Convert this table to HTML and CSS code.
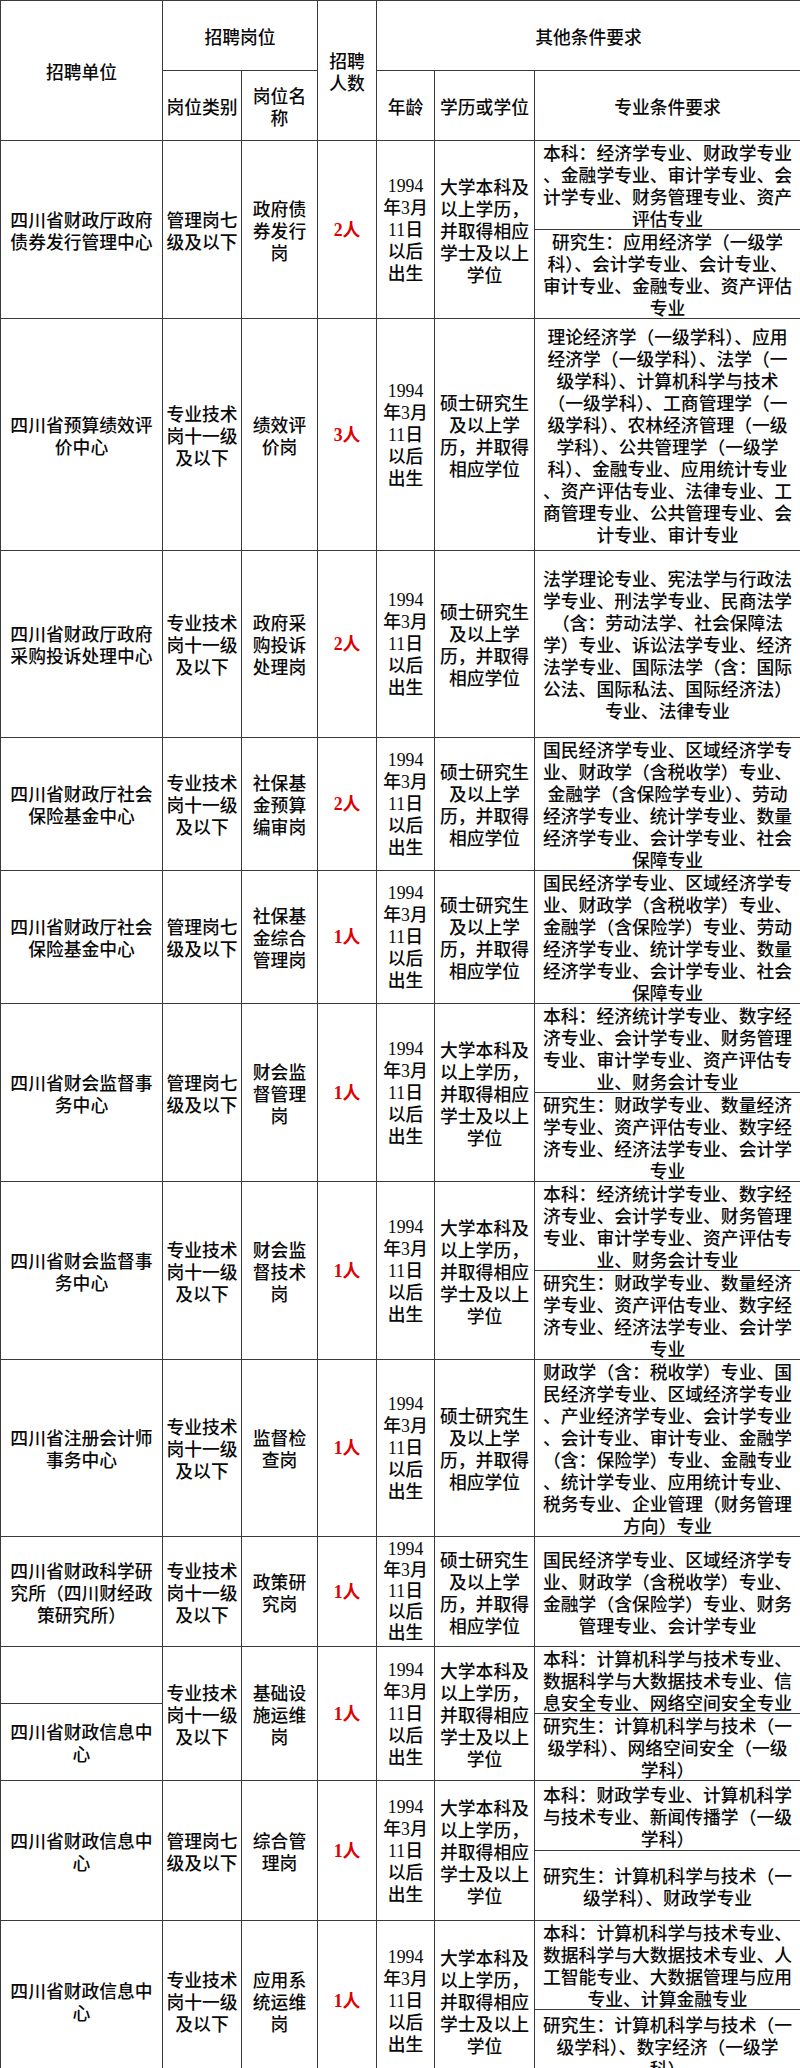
FILE: index.html
```html
<!DOCTYPE html>
<html lang="zh-CN">
<head>
<meta charset="utf-8">
<title>招聘岗位表</title>
<link rel="stylesheet" href="styles.css">
</head>
<body>
<table class="grid">
  <colgroup>
    <col class="c1"><col class="c2"><col class="c3"><col class="c4"><col class="c5"><col class="c6"><col class="c7">
  </colgroup>
  <tr class="h70">
    <td rowspan="2">招聘单位</td>
    <td colspan="2">招聘岗位</td>
    <td rowspan="2">招聘<br>人数</td>
    <td colspan="3">其他条件要求</td>
  </tr>
  <tr class="h70">
    <td>岗位类别</td>
    <td>岗位名<br>称</td>
    <td>年龄</td>
    <td>学历或学位</td>
    <td>专业条件要求</td>
  </tr>

  <!-- row 1 -->
  <tr class="h88">
    <td rowspan="2">四川省财政厅政府<br>债券发行管理中心</td>
    <td rowspan="2">管理岗七<br>级及以下</td>
    <td rowspan="2">政府债<br>券发行<br>岗</td>
    <td rowspan="2" class="count num">2人</td>
    <td rowspan="2" class="num">1994<br>年3月<br>11日<br>以后<br>出生</td>
    <td rowspan="2">大学本科及<br>以上学历，<br>并取得相应<br>学士及以上<br>学位</td>
    <td class="req">本科：经济学专业、财政学专业<br>、金融学专业、审计学专业、会<br>计学专业、财务管理专业、资产<br>评估专业</td>
  </tr>
  <tr class="h88">
    <td class="req">研究生：应用经济学（一级学<br>科）、会计学专业、会计专业、<br>审计专业、金融专业、资产评估<br>专业</td>
  </tr>

  <!-- row 2 -->
  <tr class="h232">
    <td>四川省预算绩效评<br>价中心</td>
    <td>专业技术<br>岗十一级<br>及以下</td>
    <td>绩效评<br>价岗</td>
    <td class="count num">3人</td>
    <td class="num">1994<br>年3月<br>11日<br>以后<br>出生</td>
    <td>硕士研究生<br>及以上学<br>历，并取得<br>相应学位</td>
    <td class="req">理论经济学（一级学科）、应用<br>经济学（一级学科）、法学（一<br>级学科）、计算机科学与技术<br>（一级学科）、工商管理学（一<br>级学科）、农林经济管理（一级<br>学科）、公共管理学（一级学<br>科）、金融专业、应用统计专业<br>、资产评估专业、法律专业、工<br>商管理专业、公共管理专业、会<br>计专业、审计专业</td>
  </tr>

  <!-- row 3 -->
  <tr class="h187">
    <td>四川省财政厅政府<br>采购投诉处理中心</td>
    <td>专业技术<br>岗十一级<br>及以下</td>
    <td>政府采<br>购投诉<br>处理岗</td>
    <td class="count num">2人</td>
    <td class="num">1994<br>年3月<br>11日<br>以后<br>出生</td>
    <td>硕士研究生<br>及以上学<br>历，并取得<br>相应学位</td>
    <td class="req">法学理论专业、宪法学与行政法<br>学专业、刑法学专业、民商法学<br>（含：劳动法学、社会保障法<br>学）专业、诉讼法学专业、经济<br>法学专业、国际法学（含：国际<br>公法、国际私法、国际经济法）<br>专业、法律专业</td>
  </tr>

  <!-- row 4 -->
  <tr class="h133">
    <td>四川省财政厅社会<br>保险基金中心</td>
    <td>专业技术<br>岗十一级<br>及以下</td>
    <td>社保基<br>金预算<br>编审岗</td>
    <td class="count num">2人</td>
    <td class="num">1994<br>年3月<br>11日<br>以后<br>出生</td>
    <td>硕士研究生<br>及以上学<br>历，并取得<br>相应学位</td>
    <td class="req">国民经济学专业、区域经济学专<br>业、财政学（含税收学）专业、<br>金融学（含保险学专业）、劳动<br>经济学专业、统计学专业、数量<br>经济学专业、会计学专业、社会<br>保障专业</td>
  </tr>

  <!-- row 5 -->
  <tr class="h132">
    <td>四川省财政厅社会<br>保险基金中心</td>
    <td>管理岗七<br>级及以下</td>
    <td>社保基<br>金综合<br>管理岗</td>
    <td class="count num">1人</td>
    <td class="num">1994<br>年3月<br>11日<br>以后<br>出生</td>
    <td>硕士研究生<br>及以上学<br>历，并取得<br>相应学位</td>
    <td class="req">国民经济学专业、区域经济学专<br>业、财政学（含税收学）专业、<br>金融学（含保险学）专业、劳动<br>经济学专业、统计学专业、数量<br>经济学专业、会计学专业、社会<br>保障专业</td>
  </tr>

  <!-- row 6 -->
  <tr class="h88">
    <td rowspan="2">四川省财会监督事<br>务中心</td>
    <td rowspan="2">管理岗七<br>级及以下</td>
    <td rowspan="2">财会监<br>督管理<br>岗</td>
    <td rowspan="2" class="count num">1人</td>
    <td rowspan="2" class="num">1994<br>年3月<br>11日<br>以后<br>出生</td>
    <td rowspan="2">大学本科及<br>以上学历，<br>并取得相应<br>学士及以上<br>学位</td>
    <td class="req">本科：经济统计学专业、数字经<br>济专业、会计学专业、财务管理<br>专业、审计学专业、资产评估专<br>业、财务会计专业</td>
  </tr>
  <tr class="h89">
    <td class="req">研究生：财政学专业、数量经济<br>学专业、资产评估专业、数字经<br>济专业、经济法学专业、会计学<br>专业</td>
  </tr>

  <!-- row 7 -->
  <tr class="h88">
    <td rowspan="2">四川省财会监督事<br>务中心</td>
    <td rowspan="2">专业技术<br>岗十一级<br>及以下</td>
    <td rowspan="2">财会监<br>督技术<br>岗</td>
    <td rowspan="2" class="count num">1人</td>
    <td rowspan="2" class="num">1994<br>年3月<br>11日<br>以后<br>出生</td>
    <td rowspan="2">大学本科及<br>以上学历，<br>并取得相应<br>学士及以上<br>学位</td>
    <td class="req">本科：经济统计学专业、数字经<br>济专业、会计学专业、财务管理<br>专业、审计学专业、资产评估专<br>业、财务会计专业</td>
  </tr>
  <tr class="h88">
    <td class="req">研究生：财政学专业、数量经济<br>学专业、资产评估专业、数字经<br>济专业、经济法学专业、会计学<br>专业</td>
  </tr>

  <!-- row 8 -->
  <tr class="h177">
    <td>四川省注册会计师<br>事务中心</td>
    <td>专业技术<br>岗十一级<br>及以下</td>
    <td>监督检<br>查岗</td>
    <td class="count num">1人</td>
    <td class="num">1994<br>年3月<br>11日<br>以后<br>出生</td>
    <td>硕士研究生<br>及以上学<br>历，并取得<br>相应学位</td>
    <td class="req">财政学（含：税收学）专业、国<br>民经济学专业、区域经济学专业<br>、产业经济学专业、会计学专业<br>、会计专业、审计专业、金融学<br>（含：保险学）专业、金融专业<br>、统计学专业、应用统计专业、<br>税务专业、企业管理（财务管理<br>方向）专业</td>
  </tr>

  <!-- row 9 -->
  <tr class="h110">
    <td>四川省财政科学研<br>究所（四川财经政<br>策研究所）</td>
    <td>专业技术<br>岗十一级<br>及以下</td>
    <td>政策研<br>究岗</td>
    <td class="count num">1人</td>
    <td class="num tight">1994<br>年3月<br>11日<br>以后<br>出生</td>
    <td>硕士研究生<br>及以上学<br>历，并取得<br>相应学位</td>
    <td class="req">国民经济学专业、区域经济学专<br>业、财政学（含税收学）专业、<br>金融学（含保险学）专业、财务<br>管理专业、会计学专业</td>
  </tr>

  <!-- row 10 -->
  <tr class="h57">
    <td class="blank"></td>
    <td rowspan="3">专业技术<br>岗十一级<br>及以下</td>
    <td rowspan="3">基础设<br>施运维<br>岗</td>
    <td rowspan="3" class="count num">1人</td>
    <td rowspan="3" class="num">1994<br>年3月<br>11日<br>以后<br>出生</td>
    <td rowspan="3">大学本科及<br>以上学历，<br>并取得相应<br>学士及以上<br>学位</td>
    <td rowspan="2" class="req">本科：计算机科学与技术专业、<br>数据科学与大数据技术专业、信<br>息安全专业、网络空间安全专业</td>
  </tr>
  <tr class="h8">
    <td rowspan="2">四川省财政信息中<br>心</td>
  </tr>
  <tr class="h66">
    <td class="req">研究生：计算机科学与技术（一<br>级学科）、网络空间安全（一级<br>学科）</td>
  </tr>

  <!-- row 11 -->
  <tr class="h70">
    <td rowspan="2">四川省财政信息中<br>心</td>
    <td rowspan="2">管理岗七<br>级及以下</td>
    <td rowspan="2">综合管<br>理岗</td>
    <td rowspan="2" class="count num">1人</td>
    <td rowspan="2" class="num">1994<br>年3月<br>11日<br>以后<br>出生</td>
    <td rowspan="2">大学本科及<br>以上学历，<br>并取得相应<br>学士及以上<br>学位</td>
    <td class="req">本科：财政学专业、计算机科学<br>与技术专业、新闻传播学（一级<br>学科）</td>
  </tr>
  <tr class="h70">
    <td class="req">研究生：计算机科学与技术（一<br>级学科）、财政学专业</td>
  </tr>

  <!-- row 12 -->
  <tr class="h87">
    <td rowspan="2">四川省财政信息中<br>心</td>
    <td rowspan="2">专业技术<br>岗十一级<br>及以下</td>
    <td rowspan="2">应用系<br>统运维<br>岗</td>
    <td rowspan="2" class="count num">1人</td>
    <td rowspan="2" class="num">1994<br>年3月<br>11日<br>以后<br>出生</td>
    <td rowspan="2">大学本科及<br>以上学历，<br>并取得相应<br>学士及以上<br>学位</td>
    <td class="req">本科：计算机科学与技术专业、<br>数据科学与大数据技术专业、人<br>工智能专业、大数据管理与应用<br>专业、计算金融专业</td>
  </tr>
  <tr class="h72">
    <td class="req">研究生：计算机科学与技术（一<br>级学科）、数字经济（一级学<br>科）</td>
  </tr>
</table>
</body>
</html>
```

FILE: styles.css
```css
html, body {
  margin: 0;
  padding: 0;
  background: #ffffff;
}

.grid {
  border-collapse: collapse;
  table-layout: fixed;
  width: 800px;
  font-family: "Noto Sans CJK SC", "Noto Sans CJK JP", sans-serif;
  font-size: 17.8px;
  font-weight: 500;
  line-height: 22px;
  color: #0a0a0a;
}

.grid td {
  border: 1px solid #3a3a3a;
  padding: 0 1px;
  text-align: center;
  vertical-align: middle;
  white-space: nowrap;
  overflow: hidden;
}

.c1 { width: 162px; }
.c2 { width: 79px; }
.c3 { width: 76px; }
.c4 { width: 59px; }
.c5 { width: 58px; }
.c6 { width: 100px; }
.c7 { width: 266px; }

.num {
  font-family: "Liberation Serif", "Noto Sans CJK SC", serif;
}

.tight {
  line-height: 21px;
}

.count {
  color: #e00000;
  font-weight: bold;
}

.req {
  text-align: center;
}

.h8 { height: 8px; }
.h57 { height: 57px; }
.h66 { height: 66px; }
.h70 { height: 70px; }
.h72 { height: 72px; }
.h87 { height: 87px; }
.h88 { height: 88px; }
.h89 { height: 89px; }
.h110 { height: 110px; }
.h132 { height: 132px; }
.h133 { height: 133px; }
.h177 { height: 177px; }
.h187 { height: 187px; }
.h232 { height: 232px; }
```
